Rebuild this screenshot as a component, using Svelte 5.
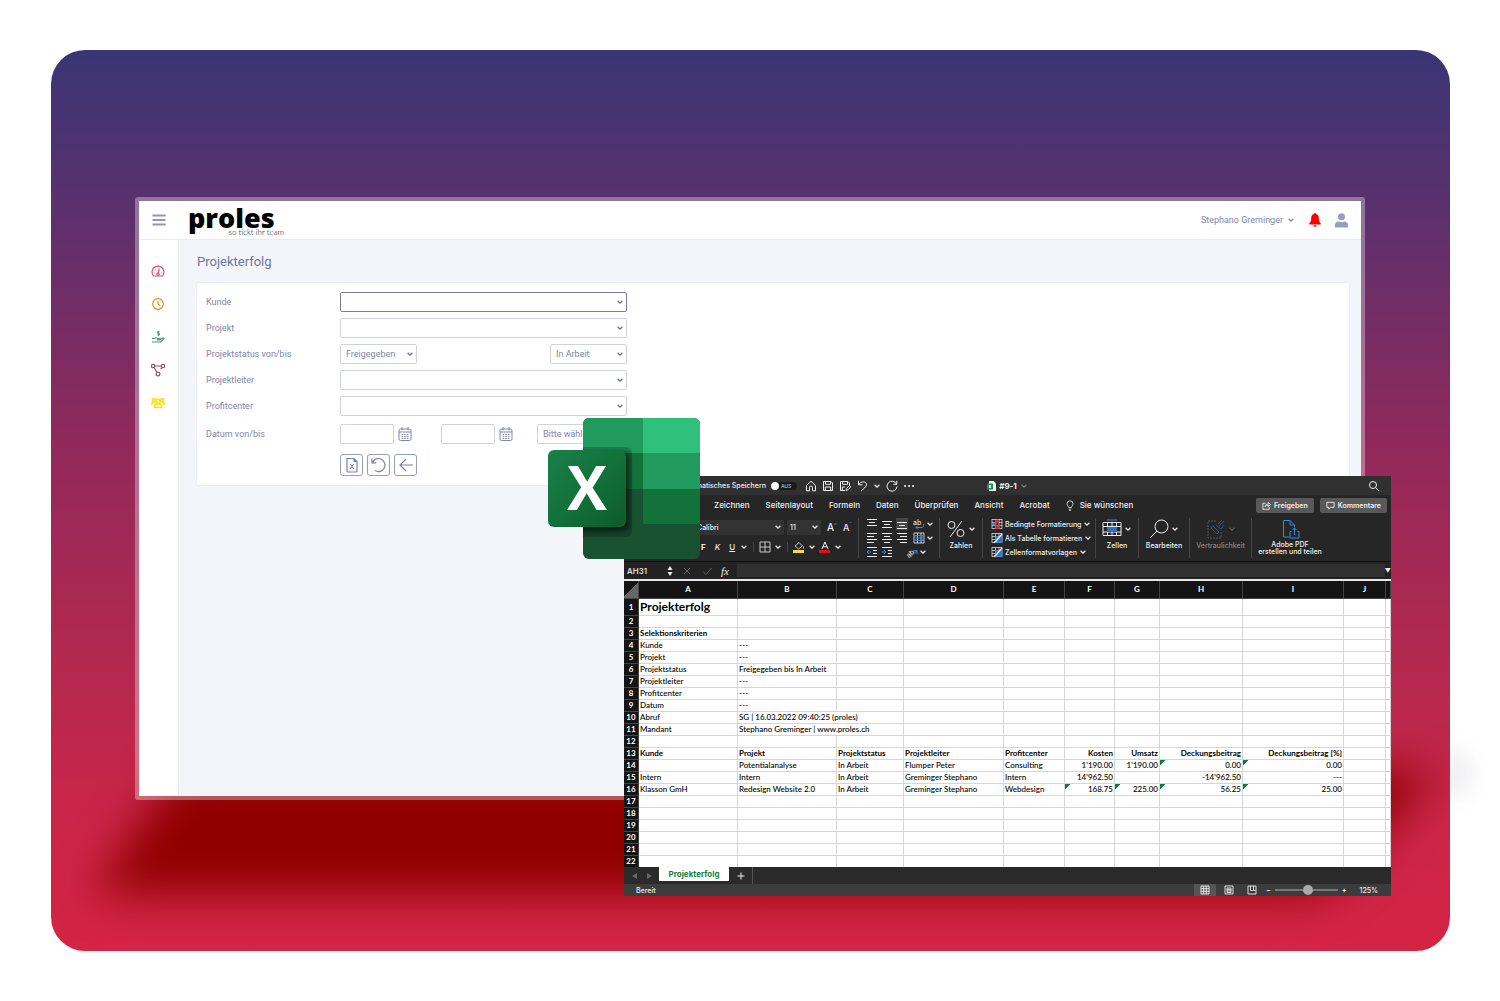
<script>
    let kunde = $state('')
    let projekt = $state('')
    let leiter = $state('')
    let center = $state('')
    let zoom = $state(53)

    const tabs = ['Zeichnen', 'Seitenlayout', 'Formeln', 'Daten', 'Überprüfen', 'Ansicht', 'Acrobat']
    const letters = ['A', 'B', 'C', 'D', 'E', 'F', 'G', 'H', 'I', 'J', '']

    const criteria = {
        4: ['Kunde', '---'],
        5: ['Projekt', '---'],
        6: ['Projektstatus', 'Freigegeben bis In Arbeit'],
        7: ['Projektleiter', '---'],
        8: ['Profitcenter', '---'],
        9: ['Datum', '---'],
        10: ['Abruf', 'SG | 16.03.2022 09:40:25 (proles)'],
        11: ['Mandant', 'Stephano Greminger | www.proles.ch'],
    }

    const cells = {
        1: ['Projekterfolg'],
        3: ['Selektionskriterien'],
        ...criteria,
        13: ['Kunde', 'Projekt', 'Projektstatus', 'Projektleiter', 'Profitcenter', 'Kosten', 'Umsatz', 'Deckungsbeitrag', 'Deckungsbeitrag [%]'],
        14: ['', 'Potentialanalyse', 'In Arbeit', 'Flumper Peter', 'Consulting', "1'190.00", "1'190.00", '0.00', '0.00'],
        15: ['Intern', 'Intern', 'In Arbeit', 'Greminger Stephano', 'Intern', "14'962.50", '', "-14'962.50", '---'],
        16: ['Klasson GmH', 'Redesign Website 2.0', 'In Arbeit', 'Greminger Stephano', 'Webdesign', '168.75', '225.00', '56.25', '25.00'],
    }

    const flags = ['14-7', '14-8', '16-5', '16-6', '16-7', '16-8']

    // long texts run over into the next column
    function span(row, col) {
        return (row === 10 || row === 11) && col === 1 ? 2 : 1
    }

    const rows = Array.from({ length: 22 }, (_, i) => i + 1)
</script>

{#snippet chevron()}
    <svg class="chevron" viewBox="0 0 8 8" aria-hidden="true"><path d="M1.6 2.8 4 5.2 6.4 2.8" /></svg>
{/snippet}

{#snippet lines(d)}
    <svg class="lines" viewBox="0 0 12 12" aria-hidden="true"><path d={d} /></svg>
{/snippet}

{#snippet calendar()}
    <svg class="calendar" viewBox="0 0 14 14" aria-hidden="true">
        <rect x="1" y="2" width="12" height="11.5" rx="1.5" />
        <path d="M1 5h12M4 0v3.4M10 0v3.4" />
        <path class="dots" d="M3.6 7.5h7M3.6 9.5h7M3.6 11.5h7" />
    </svg>
{/snippet}

{#snippet tableIcon(kind)}
    <svg class="tableIcon" viewBox="0 0 12 12" aria-hidden="true">
        <rect x="1" y="1.500" width="10" height="9" />
        <path d="M1 4.500h10M1 7.500h10M4.500 1.500v9M8 1.500v9" />
        {#if kind === 'rules'}
            <path class="red" d="M4.500 2h3v3h-3zM4.500 7.500h4v3h-4z" />
            <path class="blue" d="M2 5h3v2H2z" />
        {:else}
            <path class="blue" d="M4.500 4.500H11v6H4.500z" />
            <path class="brush" d="M11 2 5 9l-2 1.500" />
        {/if}
    </svg>
{/snippet}

<div class="page">
    <div class="haze"></div>
    <div class="stage">
        <div class="shadow"></div>

        <div class="app">
            <header class="appHeader">
                <button class="menu" aria-label="Menü">
                    <svg viewBox="0 0 14 12"><path d="M0.500 1.500h13M0.500 6h13M0.500 10.500h13" /></svg>
                </button>
                <div class="brand">
                    <span class="brandName">proles</span>
                    <span class="brandClaim">so tickt ihr team</span>
                </div>
                <button class="user">Stephano Greminger {@render chevron()}</button>
                <button class="bell" aria-label="Meldungen">
                    <svg viewBox="0 0 12 14"><path d="M6 0a1 1 0 0 0-1 1C3 1.500 2.200 3.200 2.200 5c0 3-.6 4.200-1.900 5.200-.4.500-.3 1.300.4 1.300h10.600c.7 0 .8-.8.4-1.300C10.400 9.200 9.800 8 9.800 5 9.800 3.200 9 1.500 7 1a1 1 0 0 0-1-1ZM4.400 12.200a1.600 1.600 0 0 0 3.200 0Z" /></svg>
                </button>
                <button class="profile" aria-label="Profil">
                    <svg viewBox="0 0 13 15"><circle cx="6.500" cy="3.700" r="3.500" /><path d="M0 14.500v-2.300C0 9.800 1.600 8.500 3.500 8.500c1 .5 2 .7 3 .7s2-.2 3-.7c1.900 0 3.500 1.300 3.500 3.700v2.300Z" /></svg>
                </button>
            </header>

            <div class="appBody">
                <nav class="side">
                    <a href="#dashboard" aria-label="Dashboard" class="pink">
                        <svg viewBox="0 0 14 14"><path d="M2.500 12A6 6 0 1 1 11.500 12ZM7 9.800 8.300 4.500M3.500 9h.8M4 5.700l.6.500M10 9h.8M6.500 4h.4" /><circle cx="7" cy="10.200" r="1.200" /></svg>
                    </a>
                    <a href="#zeit" aria-label="Zeit" class="orange">
                        <svg viewBox="0 0 14 14"><circle cx="7" cy="7" r="5.300" /><path d="M7 3.700V7l2 1.500" /></svg>
                    </a>
                    <a href="#kosten" aria-label="Kosten" class="green">
                        <svg viewBox="0 0 14 14"><path d="M8.500 1.800c-2-.6-2.500.9-1 1.400s1.200 2-1 1.500M7.500.8v5.500M1 8.500h2.500c1-1 2.200-1 3 0h2c.8 0 .8 1.300 0 1.300H6M8.800 9.400l3-1.300c1-.3 1.500.5.8 1L9.500 12H1" /></svg>
                    </a>
                    <a href="#prozesse" aria-label="Prozesse" class="brown">
                        <svg viewBox="0 0 14 14"><circle cx="2" cy="3" r="1.700" /><circle cx="12" cy="3" r="1.700" /><circle cx="7" cy="11" r="1.900" /><path d="M3.700 3h6.600M3 4.500l3 5M11.300 4.600 9.500 6" /></svg>
                    </a>
                    <a href="#team" aria-label="Team" class="yellow">
                        <svg viewBox="0 0 14 14"><circle cx="2.800" cy="4" r="1.400" /><circle cx="11.200" cy="4" r="1.400" /><circle cx="7" cy="5.200" r="2.100" /><path d="M.6 9V8c0-1 1-1.500 2.600-1.500M13.400 9V8c0-1-1-1.500-2.600-1.500M3.500 11.500V10c0-1.200 1-2 2-2h3c1 0 2 .8 2 2v1.500Z" /></svg>
                    </a>
                </nav>

                <main>
                    <h1>Projekterfolg</h1>
                    <form class="panel" onsubmit={(e) => e.preventDefault()}>
                        <label for="kunde">Kunde</label>
                        <div class="select focused">
                            <select id="kunde" bind:value={kunde}><option value=""></option></select>
                            {@render chevron()}
                        </div>

                        <label for="projekt">Projekt</label>
                        <div class="select">
                            <select id="projekt" bind:value={projekt}><option value=""></option></select>
                            {@render chevron()}
                        </div>

                        <label for="statusVon">Projektstatus von/bis</label>
                        <div class="split">
                            <div class="select short">
                                <select id="statusVon"><option>Freigegeben</option></select>
                                {@render chevron()}
                            </div>
                            <div class="select short">
                                <select aria-label="Projektstatus bis"><option>In Arbeit</option></select>
                                {@render chevron()}
                            </div>
                        </div>

                        <label for="leiter">Projektleiter</label>
                        <div class="select">
                            <select id="leiter" bind:value={leiter}><option value=""></option></select>
                            {@render chevron()}
                        </div>

                        <label for="center">Profitcenter</label>
                        <div class="select">
                            <select id="center" bind:value={center}><option value=""></option></select>
                            {@render chevron()}
                        </div>

                        <label class="dateLabel" for="von">Datum von/bis</label>
                        <div class="dates">
                            <div class="date"><input id="von" type="text" />{@render calendar()}</div>
                            <div class="date"><input aria-label="Datum bis" type="text" />{@render calendar()}</div>
                            <div class="select period">
                                <select aria-label="Zeitraum"><option>Bitte wählen</option></select>
                            </div>
                        </div>

                        <div class="actions">
                            <button aria-label="Excel-Export">
                                <svg viewBox="0 0 16 16"><path d="M3 1.500h7l3 3v9.500a1 1 0 0 1-1 1H4a1 1 0 0 1-1-1zM10 1.500v3h3M6.200 7l3.600 5M9.800 7l-3.600 5" /></svg>
                            </button>
                            <button aria-label="Zurücksetzen">
                                <svg viewBox="0 0 16 16"><path d="M1 1.500v4.300h4.300M1.500 5.500a6.500 6.500 0 1 1 2.500 8" /></svg>
                            </button>
                            <button aria-label="Zurück">
                                <svg viewBox="0 0 16 16"><path d="M15 8H2M8 2 2 8l6 6" /></svg>
                            </button>
                        </div>
                    </form>
                </main>
            </div>
        </div>

        <div class="excel">
            <div class="titleBar">
                <div class="quick">
                    <span>Automatisches Speichern</span>
                    <button class="toggle" aria-label="Automatisches Speichern"><i></i>AUS</button>
                    <svg class="tool" viewBox="0 0 12 12"><path d="M1.500 5.500 6 1.200l4.500 4.300v5.300H7.500V7.500a1.500 1.500 0 0 0-3 0v3.300h-3z" /></svg>
                    <svg class="tool" viewBox="0 0 12 12"><path d="M1.500 1.500h7.500l1.500 1.500v7.500h-9zM3.500 1.500v2.800h5V1.500M3.300 10.500V7h5.400v3.500" /></svg>
                    <svg class="tool" viewBox="0 0 12 12"><path d="M6 10.500H1.500v-9H9L10.500 3v2M3.500 1.500v2.800h5V1.500M3.300 10.500V7H6M7 10.500l.5-2 3-3 1.300 1.300-3 3z" /></svg>
                    <svg class="tool" viewBox="0 0 12 12"><path d="M2.500.8v4h4M2.700 4.500c3-4 8-3 7.800.3C10.400 7 7 9 5 11.200" /></svg>
                    {@render chevron()}
                    <svg class="tool" viewBox="0 0 12 12"><path d="M10.800.8v3.500H7.300M10.500 4A5 5 0 1 0 11 6.500" /></svg>
                    <svg class="tool" viewBox="0 0 12 12"><path class="more" d="M2 6h.1M6 6h.1M10 6h.1" /></svg>
                </div>
                <div class="docName">
                    <svg viewBox="0 0 9 10"><path fill="#fff" d="M2 0h4.500L9 2.500V10H2z" /><path fill="#1b8a4b" d="M0 2.500h6v6H0z" /><path stroke="#fff" d="m2 4 2 3M4 4 2 7" /></svg>
                    <b>#9-1</b>{@render chevron()}
                </div>
                <svg class="tool search" viewBox="0 0 12 12"><circle cx="5" cy="5" r="3.500" /><path d="m7.700 7.700 3.500 3.500" /></svg>
            </div>

            <div class="tabs">
                {#each tabs as tab}
                    <button>{tab}</button>
                {/each}
                <button class="wish">
                    <svg viewBox="0 0 8 11"><path d="M2.500 7.500C2.500 6 1 5.500 1 3.800a3 3 0 0 1 6 0C7 5.500 5.500 6 5.500 7.500zM2.800 9.200h2.400M3.200 10.500h1.600" /></svg>Sie wünschen
                </button>
                <div class="share">
                    <button><svg viewBox="0 0 10 10"><path d="M4 2.500H1v6.700h7V6.500M3.500 6.500c0-2 1-3 3.500-3V1.500L9.500 4 7 6.300v-1.500c-2 0-3 .5-3.500 1.700" /></svg>Freigeben</button>
                    <button><svg viewBox="0 0 10 10"><path d="M1 1.500h8v5.500H5L3 9V7H1z" /></svg>Kommentare</button>
                </div>
            </div>

            <div class="ribbon">
                <div class="group font">
                    <div class="line">
                        <button class="box wide">Calibri {@render chevron()}</button>
                        <button class="box">11 {@render chevron()}</button>
                        <span class="big">A<sup>^</sup></span>
                        <span class="big small">A<sup>ˇ</sup></span>
                    </div>
                    <div class="line second">
                        <b>F</b><i>K</i><u>U</u>{@render chevron()}
                        <span class="bar"></span>
                        <svg class="tool" viewBox="0 0 12 12"><path class="thin" d="M1 1h10v10H1zM6 1v10M1 6h10" /></svg>{@render chevron()}
                        <span class="bar"></span>
                        <svg class="tool" viewBox="0 0 12 12"><path class="thin" d="m2 5 4-3.500L9.500 5 5.500 8zM10.500 5.500v2" /><path fill="#f8dc3c" stroke="none" d="M0 9h11v3H0z" /></svg>{@render chevron()}
                        <svg class="tool" viewBox="0 0 12 12"><path d="M3 8 6 1l3 7M4 5.700h4" /><path fill="#e81010" stroke="none" d="M0 9h11v3H0z" /></svg>{@render chevron()}
                    </div>
                </div>

                <div class="group align">
                    <div class="line">
                        {@render lines('M1 1.500h10M3 4.500h6M1 7.500h10')}
                        {@render lines('M1 3.500h10M3 6.500h6M1 9.500h10')}
                        <span class="on">{@render lines('M1 4.500h10M3 7.500h6M1 10.500h10')}</span>
                        <svg class="tool wrap" viewBox="0 0 12 12"><text x="0" y="7">ab</text><path class="blue" d="M3 9.500h6q2 0 2-4M5 7.500l-2 2 2 2" /></svg>{@render chevron()}
                    </div>
                    <div class="line">
                        {@render lines('M1 1.500h10M1 4.500h7M1 7.500h10M1 10.500h7')}
                        {@render lines('M1 1.500h10M3 4.500h6M1 7.500h10M3 10.500h6')}
                        {@render lines('M1 1.500h10M4 4.500h7M1 7.500h10M4 10.500h7')}
                        <svg class="tool" viewBox="0 0 12 12"><path class="thin" d="M1 1h10v10H1zM4.500 1v10M8 1v10" /><path class="blue" d="M2 3.500h8v5H2zM3 6h6" /></svg>{@render chevron()}
                    </div>
                    <div class="line">
                        <svg class="lines" viewBox="0 0 12 12"><path d="M1 1.500h10M7 4.500h4M7 7.500h4M1 10.500h10" /><path class="blue" d="M1 6h4M3 4 1 6l2 2" /></svg>
                        <svg class="lines" viewBox="0 0 12 12"><path d="M1 1.500h10M7 4.500h4M7 7.500h4M1 10.500h10" /><path class="blue" d="M1 6h4M3 4l2 2-2 2" /></svg>
                        <svg class="tool wrap orient" viewBox="0 0 12 12"><text x="-1" y="9" transform="rotate(-45 5 6)">ab</text><path class="blue" d="m4 11.500 7-7M11 8V4.500H7.500" /></svg>{@render chevron()}
                    </div>
                </div>

                <div class="group numbers">
                    <div class="iconLine">
                        <svg class="large" viewBox="0 0 20 20"><circle cx="5.500" cy="6" r="3.500" /><circle cx="14.500" cy="14" r="3.500" /><path d="M16 2 4 18" /></svg>{@render chevron()}
                    </div>
                    <span>Zahlen</span>
                </div>

                <div class="group styles">
                    <button>{@render tableIcon('rules')}Bedingte Formatierung {@render chevron()}</button>
                    <button>{@render tableIcon('table')}Als Tabelle formatieren {@render chevron()}</button>
                    <button>{@render tableIcon('cell')}Zellenformatvorlagen {@render chevron()}</button>
                </div>

                <div class="group cellsGroup">
                    <div class="iconLine">
                        <svg class="large" viewBox="0 0 20 20"><path d="M1 3.500h18v13H1zM1 7.500h18M1 13h18M5.500 3.500v13M14.500 3.500v13M10 3.500v13" /><path fill="#2b6cc4" stroke="none" d="M5 8h10v5H5z" /><path class="blue" d="M5 1h10" /></svg>{@render chevron()}
                    </div>
                    <span>Zellen</span>
                </div>

                <div class="group edit">
                    <div class="iconLine">
                        <svg class="large" viewBox="0 0 20 20"><circle cx="12.500" cy="7.500" r="6.500" /><path d="M8 12 1 19" /></svg>{@render chevron()}
                    </div>
                    <span>Bearbeiten</span>
                </div>

                <div class="group sensitivity">
                    <div class="iconLine">
                        <svg class="large" viewBox="0 0 20 20"><path stroke-dasharray="2 1" d="M10 2H2v17h13v-7" /><path class="blue" d="m5 9 2-2 6 6-2 2zM12 5l4-4M13 7l5-5M10 6l5 4 3-4" /></svg>{@render chevron()}
                    </div>
                    <span>Vertraulichkeit</span>
                </div>

                <div class="group adobe">
                    <svg class="large" viewBox="0 0 20 20"><path class="blue" d="M9 18H3.500V1.500H10l4.500 4.500v2.500M10 1.500V6h4.500M11.500 12.500H10V19h9v-6.500h-1.500M14.500 16V9M12.500 11l2-2 2 2" /></svg>
                    <span>Adobe PDF<br />erstellen und teilen</span>
                </div>
            </div>

            <div class="formula">
                <span class="cellName">AH31</span>
                <svg class="spin" viewBox="0 0 6 12"><path d="M3 1 5.500 5h-5zM3 11 .5 7h5z" /></svg>
                <svg class="tool dim" viewBox="0 0 12 12"><path d="m3 3 6 6M9 3 3 9" /></svg>
                <svg class="tool dim" viewBox="0 0 12 12"><path d="m2 6.500 3 3L10.500 3" /></svg>
                <em>fx</em>
                <input aria-label="Formel" type="text" />
                <span class="drop">▼</span>
            </div>

            <div class="sheet">
                <table>
                    <colgroup>
                        <col class="cHead" /><col class="cA" /><col class="cA" /><col class="cC" /><col class="cD" /><col class="cE" />
                        <col class="cF" /><col class="cG" /><col class="cH" /><col class="cI" /><col class="cJ" /><col />
                    </colgroup>
                    <thead>
                        <tr>
                            <th class="corner"></th>
                            {#each letters as letter}
                                <th>{letter}</th>
                            {/each}
                        </tr>
                    </thead>
                    <tbody>
                        {#each rows as row}
                            <tr class:titleRow={row === 1} class:bold={row === 3 || row === 13}>
                                <th>{row}</th>
                                {#each letters as _, col}
                                    {#if !(col === 2 && span(row, 1) === 2)}
                                        <td
                                            colspan={span(row, col)}
                                            class:number={col > 4}
                                            class:flag={flags.includes(row + '-' + col)}
                                        >{cells[row]?.[col] ?? ''}</td>
                                    {/if}
                                {/each}
                            </tr>
                        {/each}
                    </tbody>
                </table>
            </div>

            <div class="sheetTabs">
                <span class="arrows"><svg viewBox="0 0 20 8"><path d="M5 1v6L0 4zM15 1v6l5-3z" /></svg></span>
                <button class="active">Projekterfolg</button>
                <button class="add" aria-label="Neues Blatt"><svg viewBox="0 0 8 8"><path d="M4 .5v7M.5 4h7" /></svg></button>
            </div>

            <div class="status">
                <span>Bereit</span>
                <div class="views">
                    <button class="view current" aria-label="Normal"><svg viewBox="0 0 10 10"><path d="M1 1h8v8H1zM3.700 1v8M6.300 1v8M1 3.700h8M1 6.300h8" /></svg></button>
                    <button class="view" aria-label="Seitenlayout"><svg viewBox="0 0 10 10"><path d="M1 1h8v8H1zM3 3h4v4.500H3zM3 4.500h4M3 6h4" /></svg></button>
                    <button class="view" aria-label="Umbruch"><svg viewBox="0 0 10 10"><path d="M1 1h8v8H1zM3.500 1v4.500h3V1M6.500 5.500H9" /></svg></button>
                    <b>−</b>
                    <input type="range" aria-label="Zoom" bind:value={zoom} />
                    <b>+</b>
                    <span class="percent">125%</span>
                </div>
            </div>
        </div>

        <svg class="excelLogo" viewBox="0 0 152 141" role="img" aria-label="Excel">
            <defs>
                <clipPath id="sheetShape"><rect x="35" y="0" width="117" height="141" rx="6" /></clipPath>
                <linearGradient id="front" x1="0" y1="0" x2="1" y2="1">
                    <stop offset="0" stop-color="#18804a" />
                    <stop offset="0.5" stop-color="#13713a" />
                    <stop offset="1" stop-color="#0c5c2a" />
                </linearGradient>
                <filter id="soft"><feGaussianBlur stdDeviation="2" /></filter>
            </defs>
            <g clip-path="url(#sheetShape)">
                <rect x="35" width="117" height="141" fill="#185230" />
                <rect x="35" width="60" height="35" fill="#219b5d" />
                <rect x="95" width="57" height="35" fill="#2fc07b" />
                <rect x="35" y="35" width="60" height="36" fill="#13713a" />
                <rect x="95" y="35" width="57" height="36" fill="#219b5d" />
                <rect x="95" y="71" width="57" height="35" fill="#13713a" />
                <rect x="0" y="29" width="84" height="90" rx="6" fill="#000" opacity="0.2" />
                <rect x="6" y="34" width="75" height="79" rx="6" fill="#000" opacity="0.5" filter="url(#soft)" />
            </g>
            <rect y="32" width="78" height="77" rx="6" fill="url(#front)" />
            <text x="39" y="92" text-anchor="middle">X</text>
        </svg>
    </div>
</div>

<style>
    :global(body) {
        background: #fff;
    }

    .page {
        position: relative;
        box-sizing: border-box;
        min-height: 100vh;
        padding: 50px 50px 50px 51px;
        display: flex;
        overflow: hidden;
        font-family: Roboto, sans-serif;
    }

    .haze {
        position: absolute;
        right: 26px;
        top: 748px;
        width: 36px;
        height: 50px;
        border-radius: 50%;
        background: rgba(60, 60, 90, 0.07);
        filter: blur(9px);
    }

    .stage {
        position: relative;
        box-sizing: border-box;
        flex: 1;
        min-width: 0;
        display: flex;
        padding: 147px 85px 151px 84px;
        border-radius: 34px;
        overflow: hidden;
        background: linear-gradient(#3a3575 0%, #5c306d 18%, #93295a 45%, #b9284d 72%, #cb2548 86%, #d52444 100%);
    }

    .shadow {
        position: absolute;
        left: 0;
        right: 0;
        bottom: 0;
        height: 240px;
        filter: blur(22px);
    }

    .shadow::before {
        content: '';
        position: absolute;
        inset: 0;
        background: #900000;
        clip-path: polygon(9% 25%, 99% 25%, 91% 76%, 3% 76%);
    }

    button {
        border: 0;
        padding: 0;
        background: none;
        font: inherit;
        color: inherit;
        cursor: pointer;
    }

    svg {
        display: block;
        flex: none;
        fill: none;
        stroke: currentColor;
    }

    .chevron {
        width: 8px;
        height: 8px;
        stroke-width: 1.3;
    }

    /* project app */

    .app {
        position: relative;
        box-sizing: border-box;
        flex: 1;
        min-width: 0;
        display: flex;
        flex-direction: column;
        border: 4px solid rgba(255, 255, 255, 0.33);
        border-radius: 3px;
        background: #fff;
        background-clip: padding-box;
        color: #7f86a8;
        font-size: 9px;
    }

    .appHeader {
        display: flex;
        align-items: center;
        height: 38px;
        padding: 0 13px;
        border-bottom: 1px solid #e8eaf2;
    }

    .menu svg {
        width: 14px;
        height: 12px;
        stroke: #8f95bb;
        stroke-width: 2;
    }

    .brand {
        display: flex;
        flex-direction: column;
        width: 96px;
        margin-left: 22px;
        color: #000;
    }

    .brandName {
        font: 800 27px/26px "Open Sans", sans-serif;
    }

    .brandClaim {
        align-self: flex-end;
        margin-top: -3px;
        font: 300 8px/8px Lato, sans-serif;
        white-space: nowrap;
    }

    .user {
        display: flex;
        align-items: center;
        gap: 4px;
        margin-left: auto;
    }

    .bell svg {
        width: 12px;
        height: 14px;
        margin-left: 14px;
        fill: #f00;
        stroke: none;
    }

    .profile svg {
        width: 13px;
        height: 15px;
        margin-left: 14px;
        fill: #979cc0;
        stroke: none;
    }

    .appBody {
        flex: 1;
        display: flex;
    }

    .side {
        display: flex;
        flex-direction: column;
        gap: 19px;
        width: 27px;
        padding: 24px 0 0 12px;
        border-right: 1px solid #e8eaf2;
    }

    .side svg {
        width: 14px;
        height: 14px;
        stroke-width: 1.2;
    }

    .pink { color: #d4536f; }
    .orange { color: #dd9322; }
    .green { color: #4a9b6e; }
    .brown { color: #9a5560; }
    .yellow { color: #f7e11c; }

    .yellow svg {
        stroke-width: 1.7;
    }

    main {
        flex: 1;
        padding: 13px 11px 13px 17px;
        background: #f4f5fa;
    }

    h1 {
        margin: 0 0 12px 1px;
        font-size: 13px;
        line-height: 17px;
        font-weight: 400;
        color: #7076a0;
    }

    .panel {
        display: grid;
        grid-template-columns: 134px 287px;
        row-gap: 6px;
        align-items: center;
        padding: 9px;
        border: 1px solid #eceef5;
        border-radius: 3px;
        background: #fff;
    }

    .select {
        position: relative;
        height: 20px;
    }

    select,
    .date input {
        box-sizing: border-box;
        width: 100%;
        height: 20px;
        padding: 0 5px;
        border: 1px solid #d0d2e0;
        border-radius: 2px;
        outline: none;
        appearance: none;
        background: #fff;
        font: inherit;
        color: inherit;
    }

    .focused select {
        border-color: #7d78ab;
    }

    .select .chevron {
        position: absolute;
        right: 3px;
        top: 6px;
        stroke: #6a6f93;
        pointer-events: none;
    }

    .split {
        display: flex;
        justify-content: space-between;
    }

    .short {
        width: 77px;
    }

    .dates {
        display: flex;
        gap: 29px;
    }

    .period {
        width: 89px;
        margin-left: -5px;
    }

    .dates,
    .dateLabel {
        margin-top: 2px;
    }

    .date {
        display: flex;
        align-items: center;
        gap: 4px;
    }

    .date input {
        width: 54px;
    }

    .calendar {
        width: 14px;
        height: 14px;
        color: #8186aa;
    }

    .calendar .dots {
        stroke-dasharray: 1.6 1;
    }

    .actions {
        grid-column: 2;
        display: flex;
        gap: 4px;
        margin-top: 4px;
    }

    .actions button {
        display: grid;
        place-items: center;
        box-sizing: border-box;
        width: 23px;
        height: 22px;
        border: 1px solid #9a9ebd;
        border-radius: 3px;
        color: #7d82a6;
    }

    .actions svg {
        width: 16px;
        height: 16px;
        stroke-width: 1.2;
    }

    /* spreadsheet window */

    .excel {
        position: absolute;
        left: 573px;
        right: 59px;
        bottom: 55px;
        display: flex;
        flex-direction: column;
        background: #262626;
        color: #eee;
        font-family: Inter, sans-serif;
        font-size: 7px;
        font-weight: 500;
        white-space: nowrap;
        overflow: hidden;
    }

    .titleBar {
        display: grid;
        grid-template-columns: 1fr auto 1fr;
        align-items: center;
        height: 19px;
        background: #303030;
    }

    .quick {
        display: flex;
        align-items: center;
        gap: 5px;
        margin-left: 56px;
    }

    .tool {
        width: 12px;
        height: 12px;
    }

    .more {
        stroke-width: 2;
        stroke-linecap: round;
    }

    .search {
        justify-self: end;
        margin-right: 11px;
    }

    .toggle {
        display: flex;
        align-items: center;
        gap: 2px;
        width: 26px;
        height: 8px;
        margin-right: 3px;
        border-radius: 4px;
        background: #1a1a1a;
        font-size: 5px;
        color: #bbb;
    }

    .toggle i {
        width: 8px;
        height: 8px;
        border-radius: 50%;
        background: #fff;
    }

    .docName {
        display: flex;
        align-items: center;
        gap: 3px;
        font-size: 8px;
    }

    .docName svg:first-child {
        width: 9px;
        height: 10px;
        stroke: none;
    }

    .docName .chevron {
        opacity: 0.4;
    }

    .tabs {
        display: flex;
        align-items: center;
        gap: 16px;
        height: 20px;
        padding: 0 4px 0 90px;
        font-size: 8px;
    }

    .wish,
    .share,
    .share button {
        display: flex;
        align-items: center;
        gap: 6px;
    }

    .wish svg {
        width: 8px;
        height: 11px;
        stroke-width: 0.8;
    }

    .share {
        margin-left: auto;
    }

    .share button {
        gap: 3px;
        height: 15px;
        padding: 0 6px;
        border-radius: 2px;
        background: #595959;
        font-size: 7px;
        font-weight: 600;
    }

    .share svg {
        width: 9px;
        height: 9px;
    }

    .ribbon {
        display: flex;
        height: 40px;
        padding: 3px 0 3px 73px;
        border-bottom: 1px solid #111;
    }

    .group {
        box-sizing: border-box;
        display: flex;
        flex-direction: column;
        align-items: center;
        gap: 2px;
        border-right: 1px solid #444;
    }

    .group:last-child {
        border-right: 0;
    }

    .line {
        display: flex;
        align-items: center;
        gap: 3px;
        height: 12px;
    }

    .font {
        width: 162px;
        align-items: stretch;
        gap: 8px;
        padding-top: 3px;
    }

    .box {
        display: flex;
        align-items: center;
        justify-content: space-between;
        width: 34px;
        height: 15px;
        padding: 0 2px 0 3px;
        background: #333;
    }

    .box.wide {
        width: 87px;
        padding-left: 0;
    }

    .big {
        padding-left: 3px;
        font-size: 10px;
    }

    .big.small {
        font-size: 9px;
    }

    sup {
        font-size: 6px;
        color: #4b9ae8;
    }

    .second {
        padding-left: 4px;
        font-size: 8px;
    }

    .second i {
        margin: 0 6px;
    }

    .second u {
        margin-right: 2px;
    }

    .bar {
        width: 1px;
        height: 10px;
        margin: 0 2px;
        background: #444;
    }

    .align {
        width: 81px;
        align-items: flex-start;
        padding-left: 7px;
    }

    .lines {
        width: 12px;
        height: 12px;
    }

    .on {
        background: #444;
    }

    .wrap text {
        fill: #ddd;
        stroke: none;
        font-size: 7px;
    }

    .align .tool {
        margin-left: 2px;
    }

    .align .orient {
        margin-left: 10px;
    }

    .align .chevron {
        margin-left: -2px;
    }

    .thin {
        stroke-width: 0.8;
    }

    .blue {
        stroke: #3b87dc;
    }

    .iconLine {
        display: flex;
        align-items: center;
        gap: 2px;
    }

    .large {
        width: 20px;
        height: 20px;
        margin-top: 1px;
    }

    .numbers { width: 43px; }
    .cellsGroup { width: 43px; }
    .edit { width: 51px; }
    .sensitivity { width: 62px; }
    .adobe { width: 76px; text-align: center; line-height: 7px; }

    .sensitivity {
        color: #888;
    }

    .sensitivity svg {
        opacity: 0.5;
    }

    .styles {
        width: 113px;
        align-items: flex-start;
        padding-left: 8px;
    }

    .styles button {
        display: flex;
        align-items: center;
        gap: 2px;
        height: 12px;
    }

    .tableIcon {
        width: 12px;
        height: 12px;
        stroke-width: 0.7;
    }

    .tableIcon .blue {
        fill: #2f77cc;
    }

    .red {
        fill: #e0243a;
        stroke: #e0243a;
    }

    .brush {
        stroke-width: 1.4;
    }

    .formula {
        display: flex;
        align-items: center;
        gap: 8px;
        height: 17px;
        padding-left: 3px;
        background: #222;
        border-bottom: 2px solid #e8e8e8;
        font-size: 8px;
    }

    .cellName {
        width: 32px;
    }

    .spin {
        width: 6px;
        height: 12px;
        fill: currentColor;
        stroke: none;
    }

    .dim {
        color: #666;
    }

    .formula em {
        font: italic 11px "Liberation Serif", serif;
    }

    .formula input {
        flex: 1;
        min-width: 0;
        height: 13px;
        padding: 0;
        margin-right: -8px;
        border: 0;
        background: #303030;
        color: #eee;
    }

    .drop {
        font-size: 6px;
    }

    .sheet {
        height: 286px;
        overflow: hidden;
        background: #fff;
        font-family: Lato, sans-serif;
    }

    table {
        width: 100%;
        table-layout: fixed;
        border-collapse: separate;
        border-spacing: 0;
        font-size: 8px;
        line-height: 11px;
        color: #000;
    }

    .cHead { width: 15px; }
    .cA { width: 99px; }
    .cC { width: 67px; }
    .cD { width: 100px; }
    .cE { width: 61px; }
    .cF { width: 50px; }
    .cG { width: 45px; }
    .cH { width: 83px; }
    .cI { width: 101px; }
    .cJ { width: 42px; }

    th,
    td {
        box-sizing: border-box;
        height: 12px;
        padding: 0 1px;
        border-right: 1px solid #d6d6d6;
        border-bottom: 1px solid #d6d6d6;
        text-align: left;
    }

    th {
        padding: 0;
        border-color: #444;
        background: #141414;
        color: #fff;
        font-weight: 700;
        text-align: center;
    }

    thead th {
        height: 18px;
    }

    .corner {
        background: linear-gradient(135deg, #141414 50%, #666 50%);
    }

    .titleRow th,
    .titleRow td {
        height: 17px;
        line-height: 16px;
    }

    .titleRow td {
        font-size: 12px;
        font-weight: 700;
    }

    .bold td {
        font-weight: 700;
    }

    td.number {
        text-align: right;
    }

    .flag {
        background: linear-gradient(135deg, #147a3c 4px, transparent 4px);
    }

    .sheetTabs {
        display: flex;
        height: 17px;
        background: #2a2a2a;
    }

    .arrows {
        display: grid;
        place-items: center;
        width: 35px;
    }

    .arrows svg {
        width: 20px;
        height: 8px;
        fill: #666;
        stroke: none;
    }

    .active {
        width: 70px;
        height: 14px;
        background: #fff;
        color: #14803f;
        font-weight: 700;
        font-size: 8px;
    }

    .add {
        display: grid;
        place-items: center;
        width: 24px;
        border-right: 1px solid #555;
    }

    .add svg {
        width: 8px;
        height: 8px;
    }

    .status {
        display: flex;
        align-items: center;
        justify-content: space-between;
        height: 12px;
        padding: 0 13px 0 12px;
        background: #3c3c3c;
    }

    .views {
        display: flex;
        align-items: center;
        gap: 4px;
        height: 12px;
    }

    .view {
        display: grid;
        place-items: center;
        width: 19px;
        height: 12px;
    }

    .current {
        width: 22px;
        background: #555;
    }

    .view svg {
        width: 10px;
        height: 10px;
        stroke-width: 0.9;
    }

    .status input {
        width: 63px;
        height: 10px;
        margin: 0;
        appearance: none;
        background: linear-gradient(#777, #777) center / 100% 2px no-repeat;
    }

    .status input::-webkit-slider-thumb {
        appearance: none;
        width: 10px;
        height: 10px;
        border-radius: 50%;
        background: #aaa;
    }

    .percent {
        margin-left: 9px;
    }

    .excelLogo {
        position: absolute;
        left: 497px;
        bottom: 392px;
        width: 152px;
        height: 141px;
        stroke: none;
    }

    .excelLogo text {
        fill: #fff;
        font: 700 60px "Open Sans", sans-serif;
    }
</style>
